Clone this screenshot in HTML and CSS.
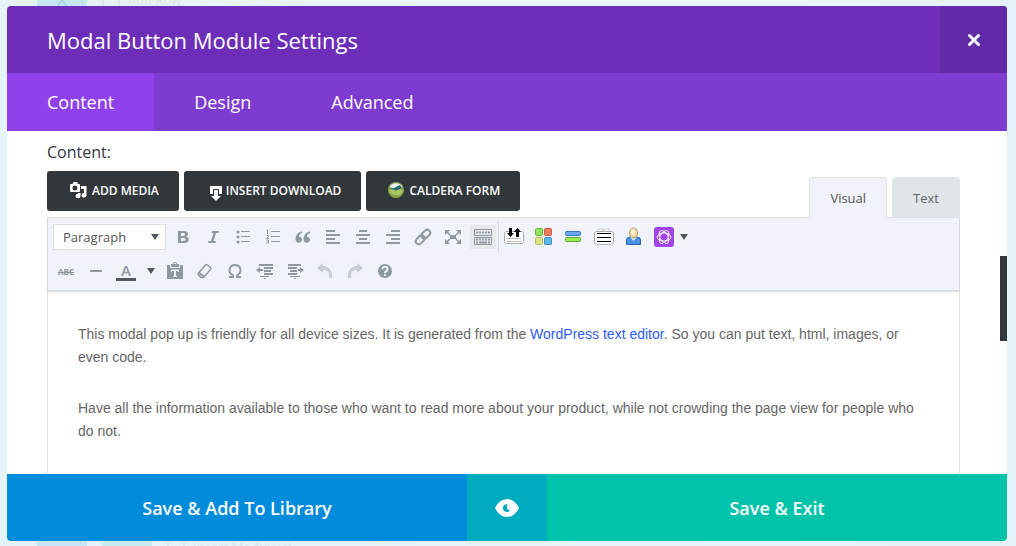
FILE: index.html
```html
<!DOCTYPE html>
<html lang="en">
<head>
  <meta charset="utf-8">
  <title>Modal Button Module Settings</title>
  <link rel="stylesheet" href="styles.css">
</head>
<body>
  <!-- Builder rows behind the modal -->
  <div class="backdrop" aria-hidden="true">
    <div class="backdrop-row">
      <span class="block blue"><svg width="16" height="14" viewBox="0 0 16 14"><path d="M2 12l6-8 6 8" fill="none" stroke="#a8d6e6" stroke-width="2"/></svg></span>
      <span class="ghost"><span class="ghost-icon"></span>Add Row</span>
    </div>
    <div class="backdrop-row">
      <span class="block blue"></span>
      <span class="block teal"></span>
      <span class="ghost"><span class="ghost-icon"></span>Insert Module(s)</span>
    </div>
  </div>

  <div class="modal" role="dialog" aria-labelledby="modal-title">
    <div class="modal-header">
      <h1 id="modal-title">Modal Button Module Settings</h1>
      <button class="close-btn" type="button" aria-label="Close">
        <svg width="14" height="14" viewBox="0 0 14 14"><path d="M2.500 2.500l9 9M11.500 2.500l-9 9" stroke="#fff" stroke-width="3" stroke-linecap="round"/></svg>
      </button>
    </div>

    <div class="modal-tabs">
      <button class="modal-tab active" type="button">Content</button>
      <button class="modal-tab" type="button">Design</button>
      <button class="modal-tab" type="button">Advanced</button>
    </div>

    <div class="modal-body">
      <div class="field-label" id="content-label">Content:</div>

      <div class="editor-tools">
        <div class="media-buttons">
          <button class="media-btn" type="button">
            <svg width="18" height="18" viewBox="0 0 18 18" fill="#fff"><path fill-rule="evenodd" d="M2 3h1.500l1-2h3.500l1 2H10q1 0 1 1v6q0 1-1 1H2q-1 0-1-1V4q0-1 1-1zM6 4.500a2.500 2.500 0 1 0 0 5 2.500 2.500 0 0 0 0-5z"/><path d="M12 5h5.500v9.500a2.500 2.300 0 1 1-2.500-2.500V8h-3zM9 12h2.500v3a2.500 2.300 0 1 1-2.500-2.300z"/></svg>
            Add Media
          </button>
          <button class="media-btn download" type="button">
            <svg width="12" height="24" viewBox="0 0 12 24"><path d="M0 16V8h12v8H9v-5H3v5z" fill="#fff"/><path d="M4 12h4v6h3l-5 5-5-5h3z" fill="#fff"/></svg>
            Insert Download
          </button>
          <button class="media-btn" type="button">
            <svg width="16" height="16" viewBox="0 0 16 16"><circle cx="8" cy="8" r="8" fill="#86a33f"/><path d="M1.500 5A7.500 7.500 0 0 1 14.500 5Q8 8 1.500 5z" fill="#eef3ee"/><path d="M2 6l4 0 6-3 2 3-4 2-5 1z" fill="#246b70"/><path d="M1 8q4-2 7 1 3-3 7-1-1 6-7 5-6 0-7-5z" fill="#a9c565"/></svg>
            Caldera Form
          </button>
        </div>
        <div class="editor-tabs">
          <button class="editor-tab active" type="button">Visual</button>
          <button class="editor-tab" type="button">Text</button>
        </div>
      </div>

      <div class="editor">
        <div class="toolbar">
          <div class="toolbar-row">
            <div class="format">
              <select aria-label="Format"><option>Paragraph</option></select>
              <svg width="8" height="6" viewBox="0 0 8 6"><path d="M0 0h8L4 6z" fill="#50575e"/></svg>
            </div>
            <button class="tool" type="button" aria-label="Bold"><svg viewBox="0 0 20 20"><path fill-rule="evenodd" d="M5 4h6c5 0 5 5 2 5.700 4 .6 4 6.300-2 6.300H5zM8 6v3h2.500c2 0 2-3 0-3zM8 11v3h3c2 0 2-3 0-3z"/></svg></button>
            <button class="tool" type="button" aria-label="Italic"><svg viewBox="0 0 20 20"><path d="M9 4h7l-.4 2H13l-2.500 8H13l-.5 2H5l.5-2H8l2.500-8H8.500z"/></svg></button>
            <button class="tool" type="button" aria-label="Bulleted list"><svg viewBox="0 0 20 20"><circle cx="5" cy="5" r="1.600"/><circle cx="5" cy="10" r="1.600"/><circle cx="5" cy="15" r="1.600"/><path d="M8 4h9v1H8zM8 9h9v1H8zM8 14h9v1H8z"/></svg></button>
            <button class="tool" type="button" aria-label="Numbered list"><svg viewBox="0 0 20 20"><path d="M8 4h9v1H8zM8 9h9v1H8zM8 14h9v1H8z"/><path d="M3.500 3.500l1-.5V7M3.500 8.500h2v1l-2 2h2.300M3.500 13h2v1.500h-1 1V16h-2" fill="none" stroke="#8f98a1"/></svg></button>
            <button class="tool" type="button" aria-label="Blockquote"><svg viewBox="0 0 20 20"><path d="M9 4.500C5.500 5 2.500 8 2.500 12c0 5.200 6.500 4.800 6.500.8 0-2-1.300-3-3-3 0-2 1.500-3.300 3.400-4zM17 4.500c-3.500.5-6.500 3.500-6.500 7.500 0 5.200 6.500 4.800 6.500.8 0-2-1.300-3-3-3 0-2 1.500-3.300 3.400-4z"/></svg></button>
            <button class="tool" type="button" aria-label="Align left"><svg viewBox="0 0 20 20"><path d="M3 3h9v2H3zM3 7h14v2H3zM3 11h9v2H3zM3 15h14v2H3z"/></svg></button>
            <button class="tool" type="button" aria-label="Align center"><svg viewBox="0 0 20 20"><path d="M6 3h8v2H6zM3 7h14v2H3zM6 11h8v2H6zM3 15h14v2H3z"/></svg></button>
            <button class="tool" type="button" aria-label="Align right"><svg viewBox="0 0 20 20"><path d="M8 3h9v2H8zM3 7h14v2H3zM8 11h9v2H8zM3 15h14v2H3z"/></svg></button>
            <button class="tool" type="button" aria-label="Insert link"><svg viewBox="0 0 20 20"><g fill="none" stroke="#8f98a1" stroke-width="2" transform="rotate(-45 10 10)"><rect x="1" y="7" width="10" height="6" rx="3"/><rect x="9" y="7" width="10" height="6" rx="3"/></g></svg></button>
            <button class="tool" type="button" aria-label="Fullscreen"><svg viewBox="0 0 20 20"><path d="M7 8h6v4H7z"/><path d="M2 3h5L2 8zM18 3v5l-5-5zM2 17v-5l5 5zM18 17h-5l5-5z"/><path d="M3 4l4 4M17 4l-4 4M3 16l4-4M17 16l-4-4" stroke="#8f98a1" stroke-width="1.500"/></svg></button>
            <button class="tool pressed" type="button" aria-label="Toolbar toggle"><svg viewBox="0 0 20 20"><path d="M1.500 2.500h17v6h-17zM1.500 10.500h17v7h-17z" fill="none" stroke="#8f98a1"/><path d="M3 5.500h14M3 12.500h14" stroke="#8f98a1" stroke-width="2" stroke-dasharray="2 1"/><path d="M3 15.500h2m1 0h8m1 0h2" stroke="#8f98a1" stroke-width="2"/></svg></button>
            <span class="divider"></span>
            <button class="tool" type="button" aria-label="Sort section"><svg viewBox="0 0 20 20"><rect x=".5" y="4.500" width="19" height="12" rx="2" fill="#fff" stroke="#aaa"/><path d="M3 11.500h14M3 14.500h14" stroke="#bbb"/><path d="M5 1h3v5h2l-3.500 4L3 6h2zM12 10V5h-2l3.500-4L17 5h-2v5z" fill="#000"/></svg></button>
            <button class="tool" type="button" aria-label="Boxes"><svg viewBox="0 0 20 20"><rect x="1.500" y="1.500" width="7" height="7" rx="1" fill="#93e65a" stroke="#6db343"/><rect x="10.500" y="1.500" width="7" height="7" rx="1" fill="#ee7c5e" stroke="#c45c42"/><rect x="1.500" y="10.500" width="7" height="7" rx="1" fill="#dfe288" stroke="#b3b95e"/><rect x="10.500" y="10.500" width="7" height="7" rx="1" fill="#5cb8ec" stroke="#3f88b8"/></svg></button>
            <button class="tool" type="button" aria-label="Buttons"><svg viewBox="0 0 20 20"><rect x="1.500" y="4.500" width="15" height="4" rx="1" fill="#6aa8f0" stroke="#3a70bd"/><rect x="1.500" y="10.500" width="15" height="4" rx="1" fill="#9cec50" stroke="#5fa636"/></svg></button>
            <button class="tool" type="button" aria-label="Tabs"><svg viewBox="0 0 20 20"><path d="M4 2h5v3H4zM10 2h5v3h-5z" fill="#fff" stroke="#ccc"/><rect x=".5" y="4.500" width="19" height="13" rx="2" fill="#fff" stroke="#aaa"/><path d="M3 6.500h14M3 10.500h14M3 14.500h14" stroke="#000"/></svg></button>
            <button class="tool" type="button" aria-label="Author"><svg viewBox="0 0 20 20"><path d="M2.500 17.500V13q0-3 4-3h6q4 0 4 3v4.500z" fill="#4d91e0" stroke="#2662b5"/><path d="M6 10l3.500 4 3.500-4z" fill="#d9e9fa"/><ellipse cx="9.500" cy="6" rx="4" ry="5" fill="#efd7a4" stroke="#b69c68"/><ellipse cx="9" cy="5" rx="2" ry="3" fill="#fff6db"/></svg></button>
            <button class="tool wide" type="button" aria-label="Shortcodes">
              <svg viewBox="0 0 20 20"><rect width="20" height="20" rx="3" fill="#a043e8"/><g fill="none" stroke="#fff" stroke-width=".9"><ellipse cx="10" cy="10" rx="7" ry="4"/><ellipse cx="10" cy="10" rx="7" ry="4" transform="rotate(60 10 10)"/><ellipse cx="10" cy="10" rx="7" ry="4" transform="rotate(120 10 10)"/></g></svg>
              <svg class="caret" viewBox="0 0 8 6"><path d="M0 0h8L4 6z"/></svg>
            </button>
          </div>
          <div class="toolbar-row">
            <button class="tool abc" type="button" aria-label="Strikethrough"><s>ABC</s></button>
            <button class="tool" type="button" aria-label="Horizontal line"><svg viewBox="0 0 20 20"><path d="M4 9h12v2H4z"/></svg></button>
            <button class="tool color" type="button" aria-label="Text color">A</button>
            <button class="tool narrow" type="button" aria-label="Choose text color"><svg class="caret" viewBox="0 0 8 6"><path d="M0 0h8L4 6z"/></svg></button>
            <button class="tool" type="button" aria-label="Paste as text"><svg viewBox="0 0 20 20"><path d="M2 4h4V3h2a2 2 0 0 1 4 0h2v1h4v14H2z"/><path d="M5.500 4v2.500h9V4M9 2.500h2" fill="none" stroke="#f0f3f9"/><path d="M6 8.500h8V11h-1v-1h-2v5h1v1H8v-1h1v-5H7v1H6z" fill="#f0f3f9"/></svg></button>
            <button class="tool" type="button" aria-label="Clear formatting"><svg viewBox="0 0 20 20"><path d="M3.500 12l7-8q1-1 2 0l3 2.500q1 1 0 2l-7 8H6l-2.500-2.500q-1-1 0-2z" fill="none" stroke="#8f98a1" stroke-width="1.500"/><path d="M3 12.500l5 3.500 1.500-1.500L4.500 11z"/></svg></button>
            <button class="tool" type="button" aria-label="Special character"><svg viewBox="0 0 20 20"><path d="M4 16h4v-1.500C1.500 10 5 4 10 4s8.500 6 2 10.500V16h4" fill="none" stroke="#8f98a1" stroke-width="2"/></svg></button>
            <button class="tool" type="button" aria-label="Decrease indent"><svg viewBox="0 0 20 20"><path d="M4 3h14v2H4zM9 6h9v2H9zM9 9h7v2H9zM9 12h9v2H9zM5 15h9v1H5zM9 17h2v1H9z"/><path d="M1 9l4-3v2h3v2H5v2z"/></svg></button>
            <button class="tool" type="button" aria-label="Increase indent"><svg viewBox="0 0 20 20"><path d="M3 3h13v2H3zM3 6h9v2H3zM5 9h7v2H5zM3 12h9v2H3zM5 15h10v1H5zM9 17h2v1H9z"/><path d="M19 9l-4-3v2h-2v2h2v2z"/></svg></button>
            <button class="tool" type="button" aria-label="Undo" disabled><svg viewBox="0 0 20 20"><path d="M8 2v3c6 0 10 5 9 12h-3c1-5-1-8-6-8v3L2 7z"/></svg></button>
            <button class="tool" type="button" aria-label="Redo" disabled><svg viewBox="0 0 20 20"><path d="M12 2v3c-6 0-10 5-9 12h3c-1-5 1-8 6-8v3l6-5z"/></svg></button>
            <button class="tool" type="button" aria-label="Help"><svg viewBox="0 0 20 20"><circle cx="10" cy="10" r="7"/><path d="M7.500 8.200c0-3.200 5-3.200 5 0 0 2-2.500 1.800-2.500 3.800" fill="none" stroke="#f0f3f9" stroke-width="2"/><path d="M9 13h2v2H9z" fill="#f0f3f9"/></svg></button>
          </div>
        </div>

        <div class="editor-content" contenteditable="true" role="textbox" aria-multiline="true" aria-labelledby="content-label" spellcheck="false">
          <p>This modal pop up is friendly for all device sizes. It is generated from the <a href="#">WordPress text editor</a>. So you can put text, html, images, or even code.</p>
          <p>Have all the information available to those who want to read more about your product, while not crowding the page view for people who do not.</p>
        </div>
      </div>
      <div class="scroll-thumb"></div>
    </div>

    <div class="modal-footer">
      <button class="save-library" type="button">Save &amp; Add To Library</button>
      <button class="preview" type="button" aria-label="Preview">
        <svg width="24" height="18" viewBox="0 0 24 18"><path d="M0 9Q1 6 5 2.500 8 0 12 0t7 2.500Q23 6 24 9q-1 3-5 6.500-3 2.500-7 2.500t-7-2.500Q1 12 0 9z" fill="#fff"/><path d="M12 5a4 4 0 1 0 3 6.500Q11 11 12 5z" fill="#00abbf"/></svg>
      </button>
      <button class="save-exit" type="button">Save &amp; Exit</button>
    </div>
  </div>
</body>
</html>
```
FILE: styles.css
```css
* {
  box-sizing: border-box;
}
body {
  margin: 0;
  padding: 6px 9px 5px 7px;
  height: 100vh;
  overflow: hidden;
  background: #e8f5fb;
  font-family: "Open Sans", sans-serif;
}
button {
  border: 0;
  margin: 0;
  padding: 0;
  background: none;
  font-family: inherit;
  cursor: pointer;
}
svg { display: block; }

/* Backdrop */
.backdrop {
  position: absolute;
  inset: 0;
  z-index: -1;
  display: flex;
  flex-direction: column;
  justify-content: space-between;
  padding-left: 37px;
  overflow: hidden;
  background: linear-gradient(90deg, #e4f4f9, #e9f5fc 50%, #e4f3fa);
}
.backdrop-row {
  display: flex;
  gap: 15px;
  height: 6px;
  align-items: flex-end;
  font-size: 13px;
  line-height: 12px;
  color: #d9e6ec;
}
.backdrop-row:last-child {
  height: 5px;
  align-items: flex-start;
}
.block { width: 50px; height: 6px; overflow: hidden; }
.block svg { margin: -4px auto 0; }
.blue { background: #c4e6f7; }
.teal { background: #c6edf0; }
.ghost {
  display: flex;
  gap: 8px;
}
.ghost-icon {
  width: 18px;
  border: 2px solid #dbe8ee;
  border-width: 0 2px;
}

/* Modal */
.modal {
  display: flex;
  flex-direction: column;
  height: 100%;
  border-radius: 4px;
  overflow: hidden;
  background: #fff;
}
.modal-header {
  display: flex;
  flex: none;
  height: 67px;
  background: #6c2eb9;
}
.modal-header h1 {
  flex: 1;
  margin: 0;
  padding: 0 40px;
  font-size: 22px;
  font-weight: 400;
  line-height: 68px;
  color: #fff;
}
.close-btn {
  display: flex;
  align-items: center;
  justify-content: center;
  width: 67px;
  background: #6229a9;
}
.modal-tabs {
  display: flex;
  flex: none;
  height: 58px;
  background: #7e3bd0;
}
.modal-tab {
  padding: 0 40px;
  font-size: 18px;
  color: #fff;
}
.modal-tab.active { background: #8f42ec; }
.modal-body {
  position: relative;
  display: flex;
  flex: 1;
  flex-direction: column;
  min-height: 0;
  padding: 10px 47px 0 40px;
}
.field-label {
  margin-bottom: 8px;
  font-size: 16px;
  font-weight: 500;
  line-height: 22px;
  color: #32373c;
}
.scroll-thumb {
  position: absolute;
  top: 125px;
  right: 0;
  width: 7px;
  height: 85px;
  background: #32373c;
}

/* Buttons above the editor */
.editor-tools {
  display: flex;
  justify-content: space-between;
  height: 46px;
}
.media-buttons {
  display: flex;
  gap: 5px;
}
.media-btn {
  display: flex;
  align-items: center;
  gap: 5px;
  height: 40px;
  padding: 0 20px 2px 22px;
  border-radius: 3px;
  background: #32373c;
  color: #fff;
  font-size: 12px;
  font-weight: 600;
  text-transform: uppercase;
}
.media-btn.download {
  gap: 4px;
  padding-left: 26px;
}
.editor-tabs {
  display: flex;
  gap: 5px;
  align-self: flex-end;
  height: 41px;
  margin-bottom: -1px;
}
.editor-tab {
  z-index: 1;
  height: 40px;
  padding: 0 20px;
  border: 1px solid #dfe5e9;
  border-bottom: 0;
  border-radius: 4px 4px 0 0;
  background: #dfe5e9;
  font-size: 13px;
  color: #666;
}
.editor-tab.active {
  height: 41px;
  background: #f0f3f9;
  color: #555;
}

/* Editor */
.editor {
  flex: 1;
  border: 1px solid #dfe3e8;
  border-bottom: 0;
}
.toolbar {
  height: 73px;
  padding: 2px 3px;
  border-bottom: 1px solid #d5d9df;
  background: #f0f3f9;
  box-shadow: 0 1px 2px rgba(0,0,0,0.15);
}
.toolbar-row {
  display: flex;
  align-items: center;
  height: 34px;
}
.format {
  position: relative;
  width: 113px;
  margin: 0 2px;
}
.format select {
  width: 100%;
  height: 26px;
  padding: 0 9px;
  border: 1px solid #dddfe3;
  border-radius: 0;
  appearance: none;
  background: #fff;
  font-family: inherit;
  font-size: 13px;
  color: #555;
}
.format svg {
  position: absolute;
  top: 10px;
  right: 7px;
  pointer-events: none;
}
.tool {
  display: flex;
  align-items: center;
  justify-content: center;
  flex: none;
  width: 30px;
  height: 26px;
  color: #8f98a1;
}
.tool svg {
  width: 20px;
  height: 20px;
  fill: #8f98a1;
}
.tool:disabled svg { fill: #c7ccd3; }
.tool .caret {
  width: 8px;
  height: 6px;
  fill: #50575e;
}
.tool.pressed {
  width: 26px;
  height: 24px;
  margin: 0 2px;
  background: #e6e8ea;
}
.tool.wide {
  width: 44px;
  gap: 6px;
}
.tool.narrow { width: 19px; }
.divider {
  width: 1px;
  height: 32px;
  background: #d8dce1;
}
.abc {
  font-size: 8px;
  font-weight: 700;
}
.color {
  width: 20px;
  height: 20px;
  margin: 0 5px;
  border-bottom: 3px solid #50575e;
  font-size: 15px;
  font-weight: 600;
}
.editor-content {
  padding: 32px 30px 0;
  outline: 0;
  font-family: "Liberation Sans", Arial, sans-serif;
  font-size: 14px;
  line-height: 23px;
  color: #666;
}
.editor-content p { margin: 0 0 28px; }
.editor-content a {
  color: #2e5bff;
  text-decoration: none;
}

/* Footer */
.modal-footer {
  display: grid;
  grid-template-columns: 1fr 80px 1fr;
  flex: none;
  height: 67px;
}
.modal-footer button {
  display: flex;
  align-items: center;
  justify-content: center;
  color: #fff;
  font-size: 18px;
  font-weight: 600;
}
.save-library { background: #008bdb; }
.preview { background: #00abbf; }
.save-exit { background: #00c3aa; }
```
